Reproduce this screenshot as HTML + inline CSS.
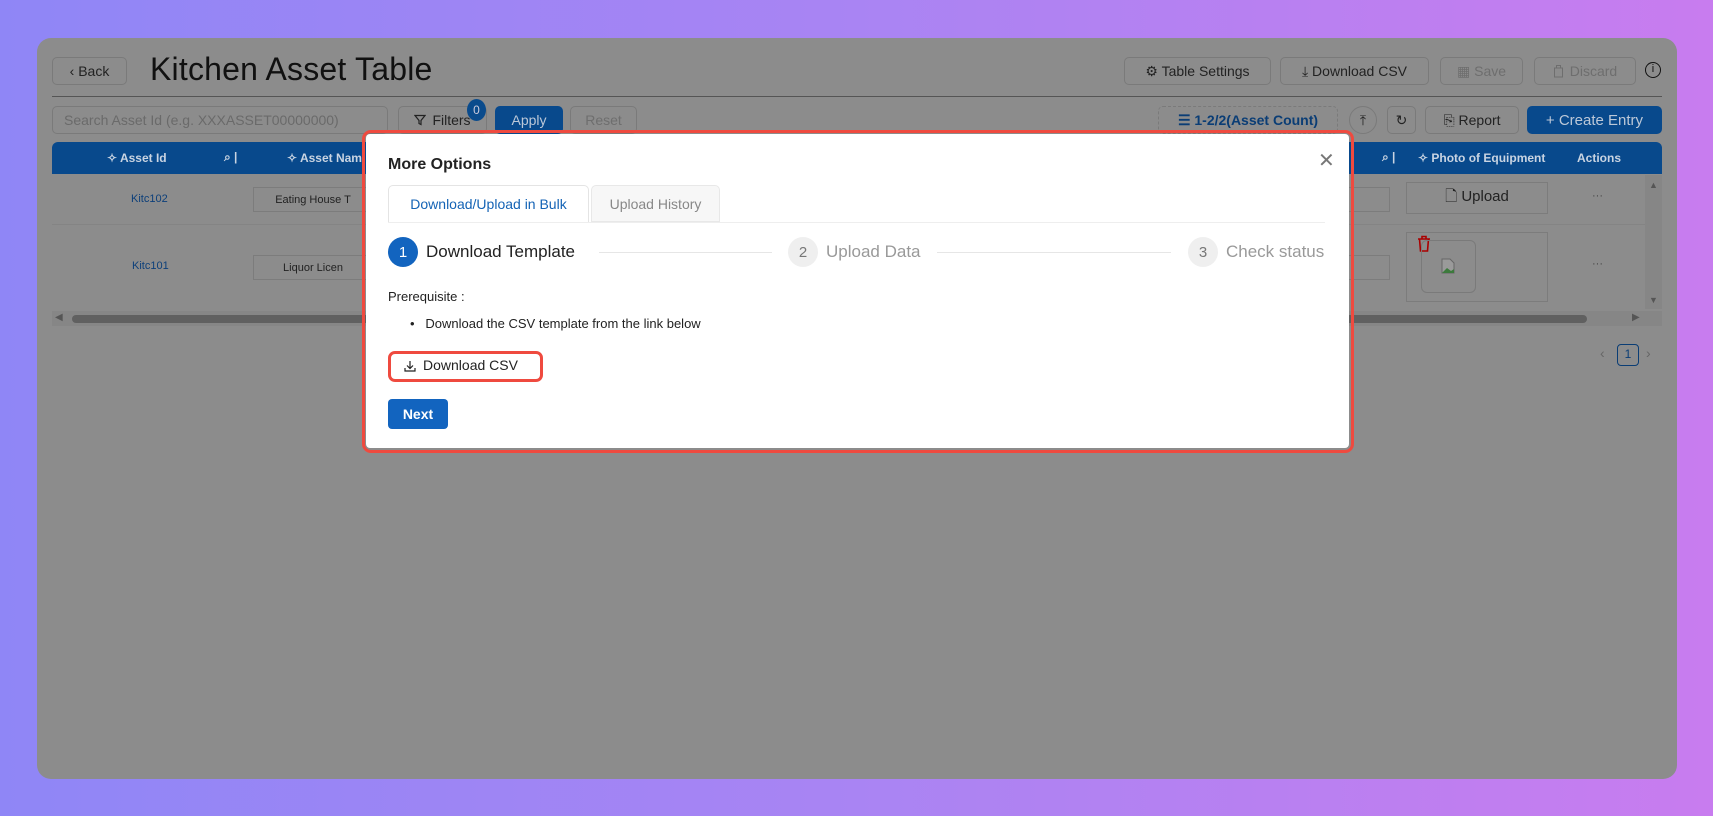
<!DOCTYPE html>
<html><head><meta charset="utf-8"><style>
*{box-sizing:border-box;margin:0;padding:0}
body{width:1713px;height:816px;overflow:hidden;background:linear-gradient(90deg,#8f86f6 0%,#a984f3 50%,#c87cef 100%);font-family:"Liberation Sans",sans-serif;position:relative}
.a{position:absolute}
.panel{left:37px;top:38px;width:1640px;height:741px;border-radius:14px;background:#8c8c8c}
.btn{position:absolute;border:1px solid #7a7a7a;border-radius:5px;background:#8c8c8c;color:#222;font-size:14px;display:flex;align-items:center;justify-content:center;gap:6px}
.dis{color:#6e6e6e}
.hdr{left:52px;top:142px;width:1610px;height:32px;background:#08498c;border-radius:6px 6px 0 0;color:#c9d4e2;font-size:12px;font-weight:bold}
.cell{position:absolute;border:1px solid #7c7c7c;background:#8c8c8c;font-size:11px;color:#222;display:flex;align-items:center;justify-content:center}
.lnk{position:absolute;font-size:11px;color:#0c3f7a}
.modal{left:366px;top:134px;width:983px;height:314px;background:#fff;border-radius:4px}
.red{border:3px solid #ef4a3f;border-radius:9px}
.circ{position:absolute;width:30px;height:30px;border-radius:50%;font-size:15px;display:flex;align-items:center;justify-content:center}
</style></head><body>
<div class="a panel"></div>
<div class="btn" style="left:52px;top:57px;width:75px;height:28px">‹ Back</div>
<div class="a" style="left:150px;top:51px;font-size:32px;color:#111;letter-spacing:0.2px">Kitchen Asset Table</div>
<div class="btn" style="left:1124px;top:57px;width:147px;height:28px">⚙ Table Settings</div>
<div class="btn" style="left:1280px;top:57px;width:149px;height:28px">⤓ Download CSV</div>
<div class="btn dis" style="left:1440px;top:57px;width:83px;height:28px">▦ Save</div>
<div class="btn dis" style="left:1534px;top:57px;width:102px;height:28px"><svg width="11" height="13" viewBox="0 0 11 13"><rect x="1.5" y="3" width="8" height="9" fill="none" stroke="#6e6e6e"/><rect x="3.5" y="0.5" width="4" height="2.5" fill="none" stroke="#6e6e6e"/></svg> Discard</div>
<div class="a" style="left:1645px;top:62px;width:16px;height:16px;border:1.5px solid #111;border-radius:50%;font-size:11px;text-align:center;line-height:13px;color:#111">i</div>
<div class="a" style="left:52px;top:96px;width:1610px;height:1px;background:#555"></div>
<div class="btn" style="left:52px;top:106px;width:336px;height:28px;justify-content:flex-start;padding-left:11px;color:#6a6a6a">Search Asset Id (e.g. XXXASSET00000000)</div>
<div class="btn" style="left:398px;top:106px;width:89px;height:28px"><svg width="12" height="12" viewBox="0 0 12 12"><path d="M1 1.5h10L7 6.5v4l-2-1v-3z" fill="none" stroke="#222" stroke-width="1.2"/></svg> Filters</div>
<div class="a" style="left:467px;top:99px;width:19px;height:22px;border-radius:50%;background:#0a4b8c;color:#ccd;font-size:12px;text-align:center;line-height:22px">0</div>
<div class="btn" style="left:495px;top:106px;width:68px;height:28px;background:#08498c;border-color:#08498c;color:#bcc8d8">Apply</div>
<div class="btn dis" style="left:570px;top:106px;width:67px;height:28px">Reset</div>
<div class="btn" style="left:1158px;top:106px;width:180px;height:28px;border-style:dashed;color:#0a3d75;font-weight:bold">☰ 1-2/2(Asset Count)</div>
<div class="btn" style="left:1349px;top:106px;width:28px;height:28px;border-radius:50%">⤒</div>
<div class="btn" style="left:1387px;top:106px;width:29px;height:28px">↻</div>
<div class="btn" style="left:1425px;top:106px;width:94px;height:28px">⎘ Report</div>
<div class="btn" style="left:1527px;top:106px;width:135px;height:28px;background:#08498c;border-color:#08498c;color:#bcc8d8;font-size:15px">+ Create Entry</div>
<div class="a hdr">
 <span class="a" style="left:55px;top:9px">✧ Asset Id</span>
 <span class="a" style="left:172px;top:8px">⌕ |</span>
 <span class="a" style="left:235px;top:9px">✧ Asset Nam</span>
 <span class="a" style="left:1330px;top:8px">⌕ |</span>
 <span class="a" style="left:1366px;top:9px">✧ Photo of Equipment</span>
 <span class="a" style="left:1525px;top:9px">Actions</span>
</div>
<div class="a" style="left:52px;top:224px;width:1600px;height:1px;background:#848484"></div>
<div class="lnk" style="left:131px;top:193px">Kitc102</div>
<div class="lnk" style="left:132px;top:260px">Kitc101</div>
<div class="cell" style="left:253px;top:187px;width:120px;height:25px">Eating House T</div>
<div class="cell" style="left:253px;top:255px;width:120px;height:25px">Liquor Licen</div>
<div class="cell" style="left:1333px;top:187px;width:57px;height:25px"></div>
<div class="cell" style="left:1333px;top:255px;width:57px;height:25px"></div>
<div class="cell" style="left:1406px;top:182px;width:142px;height:32px;font-size:15px">🗋 Upload</div>
<div class="cell" style="left:1406px;top:232px;width:142px;height:70px"></div>
<svg class="a" style="left:1417px;top:235px" width="14" height="17" viewBox="0 0 14 17"><path d="M1 4h12M5 4V1.5h4V4M2.5 4l1 12h7l1-12" fill="none" stroke="#a00" stroke-width="1.6"/></svg>
<div class="a" style="left:1421px;top:240px;width:55px;height:53px;border:1px solid #7a7a7a;border-radius:6px"></div>
<svg class="a" style="left:1441px;top:258px" width="14" height="16" viewBox="0 0 14 16"><path d="M1 1h8l4 4v10H1z" fill="#9a9a9a" stroke="#666"/><path d="M1 15l5-5 4 3 3-2v4z" fill="#3c7a3c"/></svg>
<div class="a" style="left:1592px;top:190px;font-size:11px;color:#444">···</div>
<div class="a" style="left:1592px;top:258px;font-size:11px;color:#444">···</div>
<div class="a" style="left:1645px;top:175px;width:17px;height:134px;background:#868686"></div>
<div class="a" style="left:1649px;top:180px;font-size:9px;color:#555">▲</div>
<div class="a" style="left:1649px;top:295px;font-size:9px;color:#555">▼</div>
<div class="a" style="left:52px;top:311px;width:1610px;height:15px;background:#868686"></div>
<div class="a" style="left:55px;top:312px;font-size:10px;color:#555">◀</div>
<div class="a" style="left:1632px;top:312px;font-size:10px;color:#555">▶</div>
<div class="a" style="left:72px;top:315px;width:1515px;height:8px;border-radius:4px;background:#606060"></div>
<div class="a" style="left:1600px;top:345px;font-size:14px;color:#666">‹</div>
<div class="a" style="left:1617px;top:344px;width:22px;height:22px;border:1.5px solid #0a3d75;border-radius:4px;font-size:12px;color:#0a3d75;text-align:center;line-height:19px">1</div>
<div class="a" style="left:1646px;top:345px;font-size:14px;color:#666">›</div>

<div class="a red" style="left:362px;top:130px;width:992px;height:323px"></div>
<div class="a modal">
 <div class="a" style="left:22px;top:22px;font-size:16px;font-weight:bold;color:#222">More Options</div>
 <div class="a" style="left:952px;top:14px;font-size:20px;color:#777">✕</div>
 <div class="a" style="left:22px;top:51px;width:201px;height:38px;border:1px solid #e4e4e4;border-bottom:none;border-radius:5px 5px 0 0;background:#fff;color:#1463b5;font-size:14px;text-align:center;line-height:36px">Download/Upload in Bulk</div>
 <div class="a" style="left:225px;top:51px;width:129px;height:37px;border:1px solid #e8e8e8;border-radius:5px 5px 0 0;background:#f7f7f7;color:#888;font-size:14px;text-align:center;line-height:36px">Upload History</div>
 <div class="a" style="left:22px;top:88px;width:937px;height:1px;background:#eee"></div>
 <div class="circ" style="left:22px;top:103px;background:#1264bf;color:#fff">1</div>
 <div class="a" style="left:60px;top:108px;font-size:17px;color:#222">Download Template</div>
 <div class="a" style="left:233px;top:118px;width:173px;height:1px;background:#e6e6e6"></div>
 <div class="circ" style="left:422px;top:103px;background:#efefef;color:#777">2</div>
 <div class="a" style="left:460px;top:108px;font-size:17px;color:#999">Upload Data</div>
 <div class="a" style="left:571px;top:118px;width:234px;height:1px;background:#e6e6e6"></div>
 <div class="circ" style="left:822px;top:103px;background:#efefef;color:#777">3</div>
 <div class="a" style="left:860px;top:108px;font-size:17px;color:#999">Check status</div>
 <div class="a" style="left:22px;top:155px;font-size:13px;color:#222">Prerequisite :</div>
 <div class="a" style="left:44px;top:182px;font-size:13px;color:#222">•&nbsp;&nbsp;&nbsp;Download the CSV template from the link below</div>
 <div class="a red" style="left:22px;top:217px;width:155px;height:31px;border-radius:7px"></div>
 <svg class="a" style="left:38px;top:226px" width="12" height="12" viewBox="0 0 12 12"><path d="M6 1v7M3 5.5L6 8.5 9 5.5M1 8v3h10V8" fill="none" stroke="#222" stroke-width="1.2"/></svg>
 <div class="a" style="left:57px;top:223px;font-size:14px;color:#222">Download CSV</div>
 <div class="a" style="left:22px;top:265px;width:60px;height:30px;border-radius:4px;background:#1264bf;color:#fff;font-size:14px;font-weight:bold;text-align:center;line-height:30px">Next</div>
</div>
</body></html>
